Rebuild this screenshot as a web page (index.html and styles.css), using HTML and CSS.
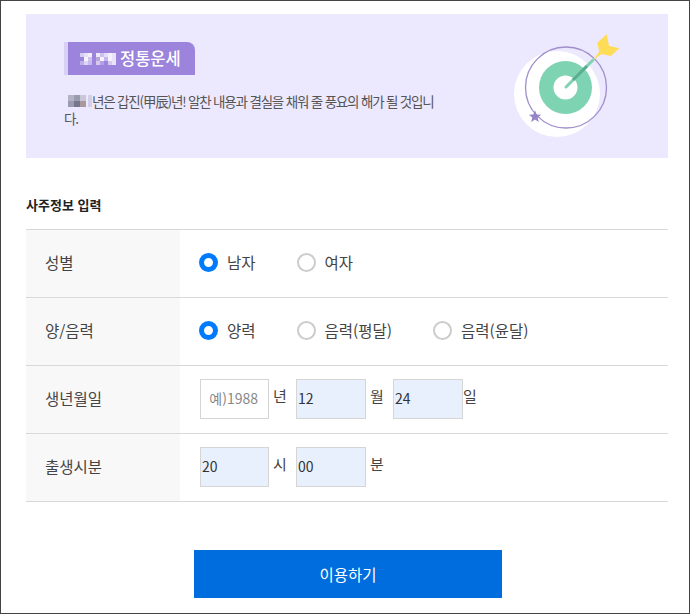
FILE: index.html
```html
<!DOCTYPE html>
<html lang="ko">
<head>
  <meta charset="UTF-8">
  <meta name="viewport" content="width=device-width, initial-scale=1.0">
  <title>정통운세</title>
  <link rel="stylesheet" href="styles.css">
</head>
<body>
  <div class="page">
    <div class="banner">
      <div class="banner-text">
        <div class="pill">
          <svg class="mosaic-title" width="36" height="14" viewBox="0 0 36 14">
            <rect x="0" y="1" width="4" height="4" fill="#d5ccf3"/><rect x="4" y="1" width="4" height="4" fill="#e6e1f9"/>
            <rect x="8" y="1" width="4" height="4" fill="#f3f0fd"/><rect x="4" y="5" width="4" height="4" fill="#f6f4fe"/>
            <rect x="8" y="5" width="4" height="4" fill="#cfc4f0"/><rect x="0" y="9" width="4" height="4" fill="#bfb0ea"/>
            <rect x="4" y="9" width="4" height="4" fill="#ddd6f6"/><rect x="8" y="9" width="4" height="4" fill="#c7baed"/>
            <rect x="16" y="1" width="4" height="4" fill="#eeeafb"/><rect x="20" y="1" width="4" height="4" fill="#cdc2ef"/>
            <rect x="16" y="5" width="4" height="4" fill="#b9a5dc"/><rect x="20" y="5" width="4" height="4" fill="#f6f3fd"/>
            <rect x="16" y="9" width="4" height="4" fill="#d9c9e8"/><rect x="20" y="9" width="4" height="4" fill="#b4a0e4"/>
            <rect x="24" y="1" width="4" height="4" fill="#e3ddf8"/><rect x="24" y="5" width="4" height="4" fill="#c4b7ec"/>
            <rect x="28" y="1" width="4" height="8" fill="#f4f1fc"/><rect x="28" y="9" width="4" height="4" fill="#d4caf2"/>
            <rect x="32" y="1" width="4" height="12" fill="#e8e3f9"/>
          </svg>
          <span>정통운세</span>
        </div>
        <p class="desc"><svg class="mosaic-desc" width="24" height="13" viewBox="0 0 24 13"><rect x="0" y="0" width="6" height="6" fill="#b4b3c6"/><rect x="6" y="0" width="6" height="6" fill="#9b9bb0"/><rect x="12" y="0" width="6" height="6" fill="#c9c6da"/><rect x="0" y="6" width="6" height="6" fill="#9a9ab0"/><rect x="6" y="6" width="6" height="6" fill="#75768c"/><rect x="12" y="6" width="6" height="6" fill="#a89a9c"/><rect x="20" y="0" width="4" height="12" fill="#d4cfe6"/></svg>년은 갑진(甲辰)년! 알찬 내용과 결실을 채워 줄 풍요의 해가 될 것입니다.</p>
      </div>
      <svg class="target" width="120" height="110" viewBox="0 0 120 110">
        <circle cx="47" cy="64" r="43" fill="#fff"/>
        <circle cx="56" cy="57.5" r="40.5" fill="none" stroke="#a08fcb" stroke-width="1.3"/>
        <circle cx="55.5" cy="57.5" r="26.5" fill="#7dd3b2"/>
        <circle cx="55.5" cy="57.5" r="12" fill="#fff"/>
        <line x1="56" y1="57" x2="83" y2="30" stroke="#7dd3b2" stroke-width="3" stroke-linecap="round"/>
        <line x1="63" y1="50" x2="77" y2="36" stroke="#5aae90" stroke-width="3"/>
        <path d="M83 30 L89.3 21.7 L87.3 12.7 L96.7 4.3 L99 16 L109.3 18.3 L100.7 26 L91.7 24 Z" fill="#ffdc55"/>
        <path d="M25 80.2 L26.65 84.43 L31.18 84.7 L27.66 87.57 L28.82 91.96 L25 89.5 L21.18 91.96 L22.34 87.57 L18.82 84.7 L23.35 84.43 Z" fill="#9582c8"/>
      </svg>
    </div>

    <h2 class="section-title">사주정보 입력</h2>

    <div class="form-table">
      <div class="row">
        <div class="label">성별</div>
        <div class="field choices">
          <span class="radio on"></span><span class="opt">남자</span>
          <span class="radio"></span><span class="opt">여자</span>
        </div>
      </div>
      <div class="row">
        <div class="label">양/음력</div>
        <div class="field choices">
          <span class="radio on"></span><span class="opt">양력</span>
          <span class="radio"></span><span class="opt">음력(평달)</span>
          <span class="radio"></span><span class="opt">음력(윤달)</span>
        </div>
      </div>
      <div class="row">
        <div class="label">생년월일</div>
        <div class="field">
          <input class="box first" type="text" placeholder="예)1988"><span class="unit">년</span>
          <input class="box filled" type="text" value="12"><span class="unit">월</span>
          <input class="box filled" type="text" value="24"><span class="unit tight">일</span>
        </div>
      </div>
      <div class="row">
        <div class="label">출생시분</div>
        <div class="field">
          <input class="box first filled" type="text" value="20"><span class="unit">시</span>
          <input class="box filled" type="text" value="00"><span class="unit">분</span>
        </div>
      </div>
    </div>

    <div class="actions">
      <button class="submit" type="button">이용하기</button>
    </div>
  </div>
</body>
</html>
```

FILE: styles.css
```css
* {
  box-sizing: border-box;
}

html, body {
  margin: 0;
  padding: 0;
}

body {
  font-family: "Noto Sans CJK KR", "Noto Sans", sans-serif;
  color: #333;
  background: #fff;
}

.page {
  width: 690px;
  height: 614px;
  border: 1px solid #444;
  padding: 13px 21px 0 25px;
  overflow: hidden;
}

.banner {
  display: flex;
  justify-content: space-between;
  height: 144px;
  background: #ece8fd;
  padding: 28px 38px 0 39px;
}

.banner-text {
  width: 375px;
}

.pill {
  display: inline-flex;
  align-items: center;
  height: 33px;
  width: 127px;
  margin-left: 3px;
  padding-left: 12px;
  gap: 4px;
  background: #9c84dc;
  box-shadow: -4px 0 0 #d8d0f5;
  border-radius: 0 8px 0 0;
  color: #fff;
  font-size: 16.5px;
  font-weight: 500;
  line-height: 1;
}

.mosaic-title {
  flex: none;
}

.desc {
  margin: 18px 0 0 -1px;
  font-size: 13.5px;
  line-height: 17px;
  letter-spacing: -1.18px;
  color: #555;
}

.mosaic-desc {
  vertical-align: -1px;
  margin-left: 4px;
}

.target {
  flex: none;
  margin-top: -12px;
}

.section-title {
  margin: 37px 0 15px;
  font-size: 13px;
  font-weight: 700;
  line-height: 19px;
  color: #222;
}

.form-table {
  border-top: 1px solid #d8d8d8;
}

.row {
  display: flex;
  height: 68px;
  border-bottom: 1px solid #d8d8d8;
}

.label {
  display: flex;
  align-items: center;
  width: 154px;
  padding: 0 0 3px 19px;
  background: #f8f8f8;
  font-size: 15.5px;
  color: #444;
}

.field {
  display: flex;
  align-items: center;
  padding-left: 19px;
  font-size: 15px;
  color: #444;
}

.choices {
  padding-bottom: 3px;
}

.radio {
  flex: none;
  width: 19px;
  height: 19px;
  border: 2px solid #ccc;
  border-radius: 50%;
  background: #fff;
}

.radio.on {
  border: 5px solid #007bff;
}

.opt {
  margin-left: 9px;
  margin-right: 41px;
  font-size: 15.5px;
}

.box {
  width: 70px;
  height: 40px;
  margin-bottom: 2px;
  padding: 0 1px 2px;
  border: 1px solid #d5d5d5;
  background: #fff;
  font-family: "Noto Sans CJK KR", "Noto Sans", sans-serif;
  font-size: 14px;
  color: #333;
  outline: none;
}

.box.first {
  width: 69px;
  margin-left: 1px;
}

.box::placeholder {
  color: #888;
  text-align: right;
}

.box:placeholder-shown {
  padding-right: 10px;
}

.box.filled {
  background: #e8f0fe;
}

.unit {
  width: 27px;
  padding-left: 4px;
  margin-top: -9px;
  font-size: 15px;
  color: #444;
}

.unit.tight {
  padding-left: 0;
}

.actions {
  display: flex;
  justify-content: center;
  margin-top: 48px;
  margin-left: 2px;
}

.submit {
  width: 308px;
  height: 48px;
  border: none;
  background: #006dde;
  color: #fff;
  font-family: "Noto Sans CJK KR", "Noto Sans", sans-serif;
  font-size: 15.5px;
  font-weight: 400;
  cursor: pointer;
}
```
